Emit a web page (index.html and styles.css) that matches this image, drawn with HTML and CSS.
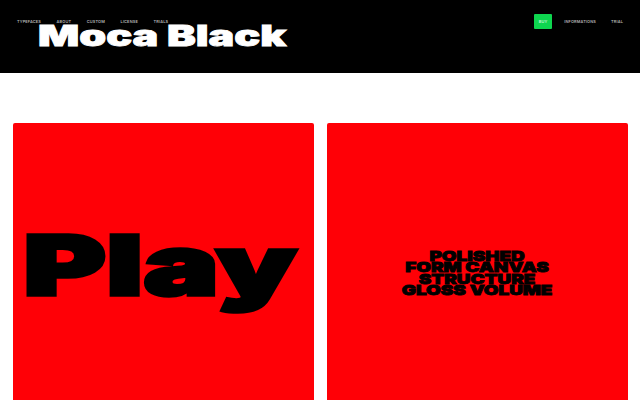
FILE: index.html
```html
<!DOCTYPE html>
<html lang="en">
<head>
<meta charset="utf-8">
<title>Moca Black</title>
<link rel="stylesheet" href="styles.css">
</head>
<body>
<header class="site-header">
  <nav class="nav">
    <ul class="nav-list nav-left">
      <li><a href="#">Typefaces</a></li>
      <li><a href="#">About</a></li>
      <li><a href="#">Custom</a></li>
      <li><a href="#">License</a></li>
      <li><a href="#">Trials</a></li>
    </ul>
    <ul class="nav-list nav-right">
      <li><a class="buy" href="#">Buy</a></li>
      <li><a href="#">Informations</a></li>
      <li><a href="#">Trial</a></li>
    </ul>
  </nav>
  <h1 class="title"><span class="title-text">Moca Black</span></h1>
</header>
<main class="cards">
  <section class="card"><span class="play">Play</span></section>
  <section class="card">
    <p class="words">POLISHED<br>FORM CANVAS<br>STRUCTURE<br>GLOSS VOLUME</p>
  </section>
</main>
</body>
</html>
```
FILE: styles.css
```css
* { box-sizing: border-box; }
html, body { margin: 0; height: 100%; overflow: hidden; background: #fff; }
body { font-family: "Inter", "Liberation Sans", sans-serif; color: #000; }

.site-header { position: relative; height: 73px; background: #000; padding: 14px 17px 0; color: #fff; }
.nav { display: flex; justify-content: space-between; align-items: flex-start; }
.nav-list { display: flex; align-items: center; list-style: none; margin: 0; padding: 0; height: 15px; }
.nav-left { gap: 15.6px; }
.nav-right { gap: 11px; }
.nav-list a { color: #b4b4b4; text-decoration: none; text-transform: uppercase; font-size: 3.9px; font-weight: 600; letter-spacing: .15px; display: block; }
.nav-right li:last-child { margin-left: 4px; }
.nav-list a.buy { width: 18px; height: 15px; line-height: 15px; text-align: center; background: #0ed64f; color: #c8f5d6; border-radius: 1px; margin-right: 1px; }

.title { position: absolute; left: 38px; top: 26px; margin: 0; font-size: 28px; line-height: 21px; font-weight: 900; color: #fff; white-space: nowrap; }
.title-text { display: inline-block; transform: scaleX(1.54); transform-origin: left center; -webkit-text-stroke: .8px #fff; }

.cards { display: grid; grid-template-columns: 1fr 1fr; gap: 13px; padding: 50px 12.5px 0; }
.card { height: 301px; background: #ff0006; border-radius: 2px; display: flex; align-items: center; justify-content: center; overflow: hidden; }
.play { display: inline-block; font-size: 83px; line-height: 1; font-weight: 900; white-space: nowrap; transform: translate(-3px, -8px) scaleX(1.52); -webkit-text-stroke: 3.5px #000; }
.words { margin: 0; text-align: center; font-size: 13.8px; line-height: 11.5px; font-weight: 900; white-space: nowrap; transform: scaleX(1.37); -webkit-text-stroke: .8px #000; }
```
